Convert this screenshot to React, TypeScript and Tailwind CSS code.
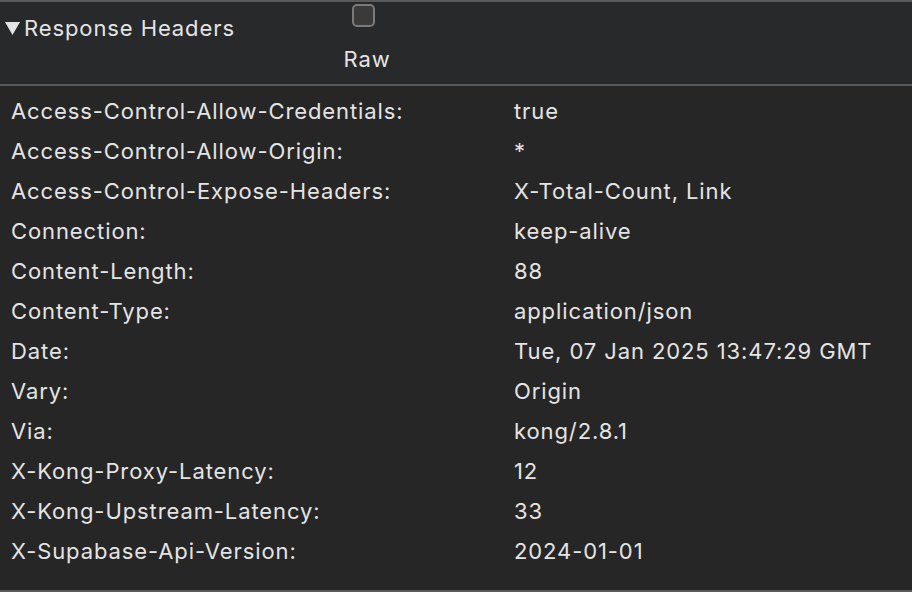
import React from "react";

const rows: [string, string][] = [
  ["Access-Control-Allow-Credentials:", "true"],
  ["Access-Control-Allow-Origin:", "*"],
  ["Access-Control-Expose-Headers:", "X-Total-Count, Link"],
  ["Connection:", "keep-alive"],
  ["Content-Length:", "88"],
  ["Content-Type:", "application/json"],
  ["Date:", "Tue, 07 Jan 2025 13:47:29 GMT"],
  ["Vary:", "Origin"],
  ["Via:", "kong/2.8.1"],
  ["X-Kong-Proxy-Latency:", "12"],
  ["X-Kong-Upstream-Latency:", "33"],
  ["X-Supabase-Api-Version:", "2024-01-01"],
];

export default function App() {
  return (
    <div
      className="w-[912px] h-[592px] bg-[#262626] text-[#e4e4e4] flex flex-col overflow-hidden tracking-[0.9px]"
      style={{ fontFamily: "Inter, 'Liberation Sans', sans-serif" }}
    >
      <div className="h-[2px] bg-[#5a5a5a]" />
      <div className="h-[82px] bg-[#28292b] flex items-start">
        <div className="w-[340px] flex items-center pl-[5px] pt-[12px]">
          <svg width="15" height="13" viewBox="0 0 15 13" className="mr-[4px]">
            <polygon points="0,0 15,0 7.5,13" fill="#e4e4e4" />
          </svg>
          <span className="text-[22px] leading-[28px]">Response Headers</span>
        </div>
        <div className="flex flex-col items-center w-[48px] pt-[2px]">
          <div className="w-[23px] h-[23px] rounded-[5px] border-2 border-[#7a7a7a] bg-[#3a3a3a] -ml-[2px]" />
          <span className="text-[22px] leading-[28px] mt-[18px] pl-[6px]">Raw</span>
        </div>
      </div>
      <div className="h-[2px] bg-[#5a5a5a]" />
      <div className="flex-1 pt-[5px] text-[22px]">
        {rows.map(([k, v]) => (
          <div key={k} className="flex h-[40px] items-center">
            <div className="w-[514px] pl-[11px]">{k}</div>
            <div>{v}</div>
          </div>
        ))}
      </div>
      <div className="h-[2px] bg-[#5a5a5a]" />
    </div>
  );
}
